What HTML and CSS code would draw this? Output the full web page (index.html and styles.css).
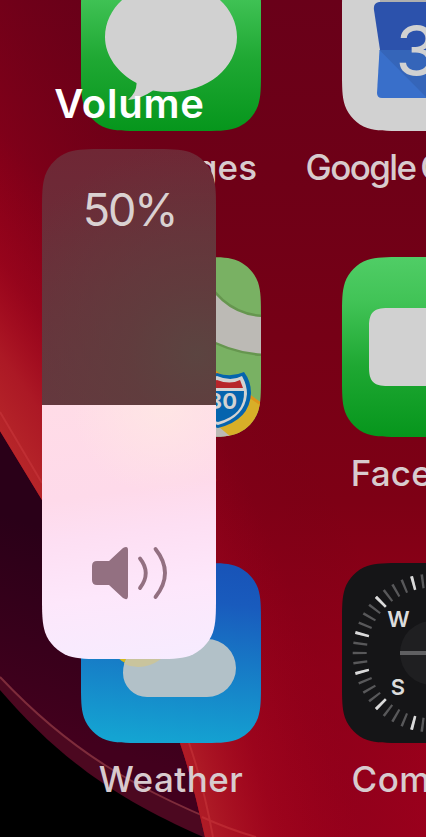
FILE: index.html
```html
<!DOCTYPE html>
<html lang="en">
<head>
<meta charset="utf-8">
<title>Volume</title>
<link rel="stylesheet" href="styles.css">
</head>
<body>
<svg class="wallpaper" viewBox="0 0 426 837" aria-hidden="true">
  <defs>
    <linearGradient id="wallRed" x1="0" y1="0" x2="0" y2="1">
      <stop offset="0" stop-color="#690019"/><stop offset=".2" stop-color="#6e0017"/><stop offset=".6" stop-color="#7e0015"/><stop offset=".8" stop-color="#960019"/><stop offset="1" stop-color="#a6001e"/>
    </linearGradient>
    <linearGradient id="wallLeft" gradientUnits="userSpaceOnUse" x1="0" y1="330" x2="200" y2="230">
      <stop offset="0" stop-color="#98001a" stop-opacity=".9"/><stop offset=".45" stop-color="#88001a" stop-opacity=".6"/><stop offset="1" stop-color="#780018" stop-opacity="0"/>
    </linearGradient>
    <radialGradient id="wallGlow" gradientUnits="userSpaceOnUse" cx="-1048" cy="1116" r="1440">
      <stop offset=".87" stop-color="#b62529"/><stop offset=".9" stop-color="#b01d27" stop-opacity=".85"/><stop offset=".94" stop-color="#a80c20" stop-opacity=".35"/><stop offset="1" stop-color="#a00018" stop-opacity="0"/>
    </radialGradient>
    <linearGradient id="wallDark" gradientUnits="userSpaceOnUse" x1="80" y1="540" x2="20" y2="720">
      <stop offset="0" stop-color="#2a0018"/><stop offset="1" stop-color="#42001d"/>
    </linearGradient>
    <path id="wall" d="M0 0H426V837H205C198 807 191 775 180 743C150 660 95 590 42 500L0 431Z"/>
  </defs>
  <rect width="426" height="837"/>
  <path fill="#4c0820" d="M0 380V690C60 760 120 802 215 842H260V380Z"/>
  <path fill="url(#wallDark)" d="M0 380V677C65 746 130 790 256 837V380Z"/>
  <path fill="none" stroke="#7e2c3b" stroke-width="2" d="M0 677C65 746 130 790 256 837"/>
  <use href="#wall" fill="url(#wallRed)"/>
  <use href="#wall" fill="url(#wallLeft)"/>
  <use href="#wall" fill="url(#wallGlow)"/>
  <path fill="none" stroke="#cc3a3d" stroke-opacity=".5" stroke-width="2" d="M0 412L42 483M189 743C199 772 207 804 213 837M202 817Q228 829 256 837"/>
</svg>

<main class="home">
  <div class="app">
    <svg class="icon" viewBox="0 0 180 180" aria-hidden="true">
      <defs><linearGradient id="green" x1="0" y1="0" x2="0" y2="1"><stop offset="0" stop-color="#50cd66"/><stop offset=".25" stop-color="#41c356"/><stop offset=".6" stop-color="#1fa833"/><stop offset="1" stop-color="#06961c"/></linearGradient></defs>
      <rect width="180" height="180" fill="url(#green)"/>
      <path fill="#d1d1d1" d="M90 31C126 31 156 55 156 86S126 141 90 141Q80 141 72 139.500Q60 148 47 149Q56 141 55.500 132C37 122 24 105 24 86C24 55 54 31 90 31Z"/>
    </svg>
    <span class="label">Messages</span>
  </div>
  <div class="app">
    <svg class="icon" viewBox="0 0 180 180" aria-hidden="true">
      <rect width="180" height="180" fill="#d1d1d1"/>
      <rect x="38" y="40" width="104" height="13" fill="#afafaf"/>
      <path fill="#2c52ac" d="M37 51H143Q148 52 148 57L142 99H38L32 59Q31 52 37 51Z"/>
      <path fill="#396fca" d="M37.500 99H142.500L145 142Q145 147 140 147H40Q35 147 35 142Z"/>
      <path fill="#3565b9" d="M37.500 99H142L143 147H85Z"/>
      <text class="date" x="53.500" y="124">31</text>
    </svg>
    <span class="label label-tight">Google Calendar</span>
  </div>
  <div class="app">
    <svg class="icon" viewBox="0 0 180 180" aria-hidden="true">
      <rect width="180" height="180" fill="#79b163"/>
      <path fill="#bcbab5" stroke="#66964f" stroke-width="2.500" d="M118 8Q139 58 184 59V98Q152 97 118 78Z"/>
      <path fill="#d8af28" stroke="#de941a" stroke-width="3" d="M120 105L184 150V190H155L110 145Z"/>
      <path fill="#bcbab5" d="M120 155L150 180H120Z"/>
      <path fill="#0564ae" d="M104 117Q120 123 136 116Q150 121 163 115Q170 124 170 136Q169 163 137 171Q104 163 103 136Z"/>
      <path fill="#d2d2d2" d="M108 121Q122 125 136 119Q150 125 161 119Q166 128 166 137Q164 160 137 168Q108 160 107 136Z"/>
      <path fill="#b7252a" d="M111 124Q123 128 136 123Q149 128 159 123L162 131H110Z"/>
      <path fill="#0564ae" d="M109 134H163Q164 158 137 165Q109 158 109 134Z"/>
      <text class="route" x="134.500" y="152">280</text>
    </svg>
    <span class="label">Maps</span>
  </div>
  <div class="app">
    <svg class="icon" viewBox="0 0 180 180" aria-hidden="true">
      <rect width="180" height="180" fill="url(#green)"/>
      <path fill="#d1d1d1" d="M27 70C27 56 31 51 46 51H98C112 51 116 56 116 70V110C116 124 112 129 98 129H46C31 129 27 124 27 110ZM122 82L148 60V120L122 98Z"/>
    </svg>
    <span class="label label-facetime">FaceTime</span>
  </div>
  <div class="app">
    <svg class="icon" viewBox="0 0 180 180" aria-hidden="true">
      <defs><linearGradient id="sky" x1=".55" y1="0" x2=".45" y2="1"><stop offset="0" stop-color="#1854b8"/><stop offset=".2" stop-color="#195bbd"/><stop offset="1" stop-color="#14a4d2"/></linearGradient></defs>
      <rect width="180" height="180" fill="url(#sky)"/>
      <circle cx="60" cy="70" r="34" fill="#d5b91c"/>
      <path fill="#b2c1c8" d="M66 134A24 24 0 0 1 42 110Q42 88 66 78Q90 58 112 78Q118 76 126 76A29 29 0 0 1 126 134Z"/>
      <path fill="#c9c49d" d="M46 96H80Q62 109 43 101Z"/>
    </svg>
    <span class="label label-weather">Weather</span>
  </div>
  <div class="app">
    <svg class="icon" viewBox="0 0 180 180" aria-hidden="true">
      <rect width="180" height="180" fill="#151517"/>
      <circle cx="90" cy="90" r="32" fill="#1f1f21"/>
      <path stroke="#606062" stroke-width="4" d="M58 90H122"/>
      <circle class="ticks" cx="90" cy="90" r="72.300" pathLength="480"/>
      <circle class="ticks ticks-major" cx="90" cy="90" r="72.300" pathLength="480"/>
      <text class="point" x="56.500" y="64">W</text>
      <text class="point" x="56" y="132">S</text>
      <text class="point" x="124" y="64">N</text>
      <text class="point" x="124" y="132">E</text>
    </svg>
    <span class="label label-compass">Compass</span>
  </div>
</main>

<section class="volume">
  <h1 class="volume-title">Volume</h1>
  <div class="slider">
    <div class="slider-empty"><span class="percent">50%</span></div>
    <div class="slider-fill">
      <svg class="speaker" viewBox="0 0 76 54" aria-hidden="true">
        <path fill="#937081" d="M5 15H17L31 2Q36-1 36 4V50Q36 55 31 52L17 39H5Q0 39 0 34V20Q0 15 5 15Z"/>
        <path fill="none" stroke="#937081" stroke-width="3.800" stroke-linecap="round" d="M48 12.500Q59.500 27 48 42M63.500 3Q82.500 27 63.500 51"/>
      </svg>
    </div>
  </div>
</section>
</body>
</html>
```
FILE: styles.css
```css
html { overflow: hidden; }

body {
  margin: 0;
  height: 837px;
  position: relative;
  overflow: hidden;
  background: #000;
  font-family: Inter, "Liberation Sans", sans-serif;
}

.wallpaper {
  position: absolute;
  inset: 0;
  width: 426px;
  height: 837px;
}

.home {
  position: relative;
  display: grid;
  grid-template-columns: 180px 180px;
  grid-auto-rows: 306px;
  column-gap: 81px;
  margin-top: -49px;
  padding-left: 81px;
}

.app {
  display: flex;
  flex-direction: column;
  align-items: center;
  gap: 14px;
}

.icon {
  display: block;
  width: 180px;
  height: 180px;
  flex: none;
  clip-path: path("M61.1 0H118.9C136.5 0 145.3 0 153.2 2.600L154.700 3C165.100 6.800 173.200 14.900 177 25.300C180 34.700 180 43.500 180 61.100V118.900C180 136.500 180 145.300 177 154.700C173.200 165.100 165.100 173.200 154.700 177C145.300 180 136.500 180 118.900 180H61.100C43.500 180 34.700 180 25.300 177C14.900 173.200 6.800 165.100 3 154.700C0 145.300 0 136.500 0 118.900V61.100C0 43.500 0 34.700 3 25.300C6.800 14.900 14.900 6.800 25.300 3C34.700 0 43.500 0 61.100 0Z");
}

.label {
  color: #d8cbce;
  font-size: 35px;
  line-height: 44px;
  font-weight: 500;
  letter-spacing: 0.2px;
  white-space: nowrap;
}

.label-tight {
  letter-spacing: -1.6px;
  word-spacing: -3px;
}
.label-facetime { letter-spacing: 0.2px; }
.label-compass { letter-spacing: 0.5px; }
.label-weather { letter-spacing: 0.5px; }

.date {
  font-size: 68px;
  letter-spacing: -4px;
  fill: #d1d1d1;
}

.route {
  font-size: 22px;
  font-weight: 700;
  text-anchor: middle;
  fill: #d2d2d2;
}

.ticks {
  fill: none;
  stroke: #58585a;
  stroke-width: 14px;
  stroke-dasharray: 2.500 7.500;
  stroke-dashoffset: 1.250;
}

.ticks-major {
  stroke: #dadada;
  stroke-dasharray: 2.900 37.100;
  stroke-dashoffset: -18.550;
}

.point {
  font-size: 22px;
  font-weight: 600;
  text-anchor: middle;
  fill: #dcdcdc;
}

.volume {
  position: absolute;
  left: 42px;
  top: 79px;
  width: 174px;
}

.volume-title {
  margin: 0 0 20px;
  font-size: 40px;
  line-height: 50px;
  font-weight: 600;
  letter-spacing: 0.8px;
  text-indent: 1px;
  text-align: center;
  color: #fff;
}

.slider {
  display: flex;
  flex-direction: column;
  height: 510px;
  clip-path: path("M64.200 0H109.800C128.300 0 137.500 0 147.500 3.100C158.300 7.100 166.900 15.700 170.900 26.500C174 36.500 174 45.700 174 64.200V445.800C174 464.300 174 473.500 170.900 483.500C166.900 494.300 158.300 502.900 147.500 506.900C137.500 510 128.300 510 109.800 510H64.200C45.700 510 36.500 510 26.500 506.900C15.700 502.900 7.100 494.300 3.100 483.500C0 473.500 0 464.300 0 445.800V64.200C0 45.700 0 36.500 3.100 26.500C7.100 15.700 15.700 7.100 26.500 3.100C36.500 0 45.700 0 64.200 0Z");
}

.slider-empty {
  display: flex;
  justify-content: center;
  height: 256px;
  box-sizing: border-box;
  padding-top: 33px;
  background:
    radial-gradient(circle at 155px 205px, rgba(90, 70, 65, 0.9), rgba(94, 63, 62, 0.75) 70px, rgba(108, 45, 56, 0) 210px),
    linear-gradient(#6f2735, #67363e);
}

.percent {
  font-size: 45px;
  line-height: 56px;
  letter-spacing: -2.2px;
  text-indent: 1px;
  color: #dad1d1;
}

.slider-fill {
  flex: 1;
  display: flex;
  align-items: flex-start;
  justify-content: center;
  background:
    radial-gradient(circle at 120px 0, rgba(254, 232, 228, 0.8), rgba(254, 228, 230, 0) 90px),
    linear-gradient(172deg, #f6ecff 0%, #fde7fb 28%, #fddff6 50%, #fed9ea 65%, #ffdce7 100%);
  background:
    radial-gradient(circle at 120px 0, rgba(254, 232, 228, 0.8), rgba(254, 228, 230, 0) 90px),
    linear-gradient(172deg, #ffdce7 0%, #fedaea 35%, #fddff3 50%, #fde7fb 72%, #f6ecff 100%);
}

.speaker {
  width: 76px;
  height: 54px;
  margin: 141px 0 0 2px;
  overflow: visible;
}
```
